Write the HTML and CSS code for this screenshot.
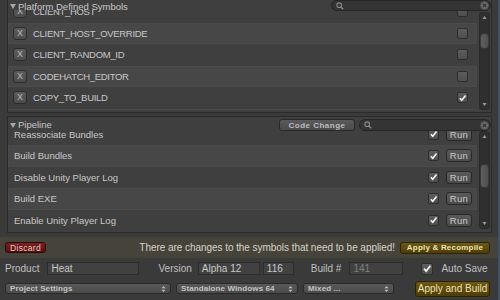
FILE: index.html
```html
<!DOCTYPE html>
<html>
<head>
<meta charset="utf-8">
<link rel="stylesheet" href="styles.css">
</head>
<body>
<div class="app">
  <section class="panel sym-panel">
    <div class="phead">
      <span class="fold"></span><span class="ptitle">Platform Defined Symbols</span>
      <span class="spacer"></span>
      <div class="search sym-search">
        <svg class="mag" width="8" height="8" viewBox="0 0 8 8"><circle cx="3.2" cy="3.2" r="2.3" fill="none" stroke="#8a8a8a" stroke-width="1.1"/><path d="M4.9 4.9 L7.2 7.2" stroke="#8a8a8a" stroke-width="1.4"/></svg>
        <span class="spacer"></span>
        <svg class="clr" width="9" height="9" viewBox="0 0 9 9"><circle cx="4.5" cy="4.5" r="4" fill="#6e6e6e" stroke="#4a4a4a" stroke-width="0.8"/><path d="M2.8 2.8 L6.2 6.2 M6.2 2.8 L2.8 6.2" stroke="#2e2e2e" stroke-width="1.2"/></svg>
      </div>
    </div>
    <div class="plist sym-list">
      <div class="rows sym-rows">
        <div class="row"><span class="xbtn">X</span><span class="sym">CLIENT_HOST</span><span class="cb"></span></div>
        <div class="row alt"><span class="xbtn">X</span><span class="sym">CLIENT_HOST_OVERRIDE</span><span class="cb"></span></div>
        <div class="row"><span class="xbtn">X</span><span class="sym">CLIENT_RANDOM_ID</span><span class="cb"></span></div>
        <div class="row alt"><span class="xbtn">X</span><span class="sym">CODEHATCH_EDITOR</span><span class="cb"></span></div>
        <div class="row"><span class="xbtn">X</span><span class="sym">COPY_TO_BUILD</span><span class="cb on"><svg width="10" height="10" viewBox="0 0 10 10"><path d="M2 5.2 L4.2 7.6 L8.4 2.2" fill="none" stroke="#f2f2f2" stroke-width="1.8"/></svg></span></div>
        <div class="row alt"><span class="xbtn">X</span><span class="sym">DEBUG_BUILD</span><span class="cb"></span></div>
      </div>
      <div class="scrollbar">
        <svg class="arr" width="11" height="9" viewBox="0 0 11 9"><path d="M3.5 6 L5.5 3 L7.5 6 Z" fill="#9a9a9a"/></svg>
        <div class="track sym-track"><span class="thumb"></span></div>
        <svg class="arr" width="11" height="9" viewBox="0 0 11 9"><path d="M3.5 3 L5.5 6 L7.5 3 Z" fill="#9a9a9a"/></svg>
      </div>
    </div>
  </section>

  <section class="panel pipe-panel">
    <div class="phead pipe-head">
      <span class="fold"></span><span class="ptitle">Pipeline</span>
      <span class="spacer"></span>
      <span class="btn codechange">Code Change</span>
      <div class="search pipe-search">
        <svg class="mag" width="8" height="8" viewBox="0 0 8 8"><circle cx="3.2" cy="3.2" r="2.3" fill="none" stroke="#8a8a8a" stroke-width="1.1"/><path d="M4.9 4.9 L7.2 7.2" stroke="#8a8a8a" stroke-width="1.4"/></svg>
        <span class="spacer"></span>
        <svg class="clr" width="9" height="9" viewBox="0 0 9 9"><circle cx="4.5" cy="4.5" r="4" fill="#6e6e6e" stroke="#4a4a4a" stroke-width="0.8"/><path d="M2.8 2.8 L6.2 6.2 M6.2 2.8 L2.8 6.2" stroke="#2e2e2e" stroke-width="1.2"/></svg>
      </div>
    </div>
    <div class="plist pipe-list">
      <div class="rows pipe-rows">
        <div class="row prow"><span class="step">Reassociate Bundles</span><span class="cb on"><svg width="10" height="10" viewBox="0 0 10 10"><path d="M2 5.2 L4.2 7.6 L8.4 2.2" fill="none" stroke="#f2f2f2" stroke-width="1.8"/></svg></span><span class="btn run">Run</span></div>
        <div class="row prow alt"><span class="step">Build Bundles</span><span class="cb on"><svg width="10" height="10" viewBox="0 0 10 10"><path d="M2 5.2 L4.2 7.6 L8.4 2.2" fill="none" stroke="#f2f2f2" stroke-width="1.8"/></svg></span><span class="btn run">Run</span></div>
        <div class="row prow"><span class="step">Disable Unity Player Log</span><span class="cb on"><svg width="10" height="10" viewBox="0 0 10 10"><path d="M2 5.2 L4.2 7.6 L8.4 2.2" fill="none" stroke="#f2f2f2" stroke-width="1.8"/></svg></span><span class="btn run">Run</span></div>
        <div class="row prow alt"><span class="step">Build EXE</span><span class="cb on"><svg width="10" height="10" viewBox="0 0 10 10"><path d="M2 5.2 L4.2 7.6 L8.4 2.2" fill="none" stroke="#f2f2f2" stroke-width="1.8"/></svg></span><span class="btn run">Run</span></div>
        <div class="row prow"><span class="step">Enable Unity Player Log</span><span class="cb on"><svg width="10" height="10" viewBox="0 0 10 10"><path d="M2 5.2 L4.2 7.6 L8.4 2.2" fill="none" stroke="#f2f2f2" stroke-width="1.8"/></svg></span><span class="btn run">Run</span></div>
      </div>
      <div class="scrollbar">
        <svg class="arr" width="11" height="9" viewBox="0 0 11 9"><path d="M3.5 6 L5.5 3 L7.5 6 Z" fill="#9a9a9a"/></svg>
        <div class="track pipe-track"><span class="thumb"></span></div>
        <svg class="arr" width="11" height="9" viewBox="0 0 11 9"><path d="M3.5 3 L5.5 6 L7.5 3 Z" fill="#9a9a9a"/></svg>
      </div>
    </div>
  </section>

  <div class="changes">
    <span class="btn discard">Discard</span>
    <span class="spacer"></span>
    <span class="msg">There are changes to the symbols that need to be applied!</span>
    <span class="btn gold recompile">Apply &amp; Recompile</span>
  </div>

  <div class="meta">
    <span class="lbl l-product">Product</span>
    <span class="field f-product">Heat</span>
    <span class="lbl l-version">Version</span>
    <span class="field f-version">Alpha 12</span>
    <span class="field f-minor">116</span>
    <span class="lbl l-build">Build #</span>
    <span class="field f-build dim">141</span>
    <span class="cb on big"><svg width="11" height="11" viewBox="0 0 11 11"><path d="M2.2 5.6 L4.6 8.3 L9.2 2.4" fill="none" stroke="#f2f2f2" stroke-width="1.9"/></svg></span>
    <span class="lbl l-auto">Auto Save</span>
  </div>

  <div class="actions">
    <span class="popup p-settings">Project Settings<svg width="5" height="8" viewBox="0 0 5 8"><path d="M0.5 3.3 L2.5 1 L4.5 3.3 Z M0.5 4.7 L2.5 7 L4.5 4.7 Z" fill="#bdbdbd"/></svg></span>
    <span class="popup p-platform">Standalone Windows 64<svg width="5" height="8" viewBox="0 0 5 8"><path d="M0.5 3.3 L2.5 1 L4.5 3.3 Z M0.5 4.7 L2.5 7 L4.5 4.7 Z" fill="#bdbdbd"/></svg></span>
    <span class="popup p-mixed">Mixed ...<svg width="5" height="8" viewBox="0 0 5 8"><path d="M0.5 3.3 L2.5 1 L4.5 3.3 Z M0.5 4.7 L2.5 7 L4.5 4.7 Z" fill="#bdbdbd"/></svg></span>
    <span class="spacer"></span>
    <span class="btn gold applybuild">Apply and Build</span>
  </div>
</div>
</body>
</html>
```

FILE: styles.css
```css
* { box-sizing: border-box; }

html, body {
  margin: 0;
  padding: 0;
}

body {
  width: 500px;
  height: 300px;
  overflow: hidden;
  background: #3a3a3a;
  font-family: "Liberation Sans", Arial, sans-serif;
  font-size: 9.5px;
  color: #c4c4c4;
}

.app {
  width: 500px;
  height: 300px;
  display: flex;
  flex-direction: column;
  border-right: 2px solid #3d5266;
  white-space: nowrap;
}

.spacer { flex: 1; }

/* ---------- panels ---------- */
.panel {
  margin: 0 6px 0 7px;
  border: 1px solid #2b2b2b;
  background: #3f3f3f;
  display: flex;
  flex-direction: column;
  flex: none;
}

.sym-panel {
  margin-top: -1px;
  height: 114px;
}

.pipe-panel {
  margin-top: 3px;
  height: 117px;
}

.phead {
  position: relative;
  z-index: 1;
  height: 10px;
  display: flex;
  align-items: flex-start;
  flex: none;
}

.pipe-head { height: 13px; }

.fold {
  width: 0;
  height: 0;
  margin: 4px 2px 0 2px;
  border-left: 3px solid transparent;
  border-right: 3px solid transparent;
  border-top: 5px solid #a8a8a8;
}

.ptitle {
  line-height: 11px;
  margin-top: 1px;
  font-size: 9.5px;
  color: #c8c8c8;
}

.pipe-head .fold { margin-top: 6px; }
.pipe-head .ptitle { margin-top: 3px; line-height: 10px; }

.search {
  height: 11px;
  border: 1px solid #262626;
  border-radius: 6px;
  background: #343434;
  display: flex;
  align-items: center;
  padding: 0 1px 0 4px;
}

.sym-search {
  width: 160px;
  margin-right: 0;
}

.pipe-search {
  width: 132px;
  height: 12px;
  margin-top: 2px;
  margin-left: 4px;
}

.mag { display: block; }
.clr { display: block; }

.btn {
  display: flex;
  align-items: center;
  justify-content: center;
  border: 1px solid #282828;
  border-radius: 3px;
  background: linear-gradient(#5a5a5a, #4b4b4b);
  color: #c8c8c8;
  flex: none;
  white-space: nowrap;
}

.codechange {
  width: 76px;
  height: 12px;
  margin-top: 2px;
  font-size: 8px;
  font-weight: bold;
  letter-spacing: 0.5px;
  color: #bdbdbd;
}

/* ---------- lists ---------- */
.plist {
  display: flex;
  flex: none;
  overflow: hidden;
}

.sym-list { height: 100px; }
.pipe-list { height: 101px; }

.rows {
  flex: none;
  width: 469px;
  display: flex;
  flex-direction: column;
}

.sym-rows { margin-top: -9px; }
.pipe-rows { margin-top: -6.5px; }

.row {
  flex: none;
  height: 21.5px;
  display: flex;
  align-items: center;
  padding: 0 9px 0 5px;
}

.row.alt {
  background: #474747;
  box-shadow: inset 0 0 0 1px #4b4b4b;
}

.xbtn {
  width: 14px;
  height: 13px;
  border: 1px solid #2c2c2c;
  border-radius: 3px;
  background: linear-gradient(#5c5c5c, #4c4c4c);
  color: #bdbdbd;
  font-size: 9px;
  line-height: 11px;
  text-align: center;
  flex: none;
}

.sym {
  flex: 1;
  margin-left: 6px;
  font-size: 9.5px;
  letter-spacing: -0.3px;
  color: #c8c8c8;
}

.cb {
  width: 11px;
  height: 11px;
  border: 1px solid #2e2e2e;
  border-radius: 2px;
  background: linear-gradient(#5d5d5d, #4e4e4e);
  flex: none;
  display: flex;
  align-items: center;
  justify-content: center;
}

.cb svg { display: block; }

.prow { padding: 0 5px 0 6px; }

.step {
  flex: 1;
  color: #c8c8c8;
}

.run {
  width: 26px;
  height: 13px;
  margin-left: 7px;
  font-size: 9.5px;
  letter-spacing: 0.3px;
}

.scrollbar {
  flex: none;
  width: 11px;
  margin-left: 2px;
  display: flex;
  flex-direction: column;
  background: #2f2f2f;
  border: 1px solid #2a2a2a;
  border-radius: 3px;
}

.sym-list .scrollbar { margin-top: 2px; height: 98px; }
.pipe-list .scrollbar { margin-top: 1px; height: 98px; }

.arr { display: block; flex: none; margin-left: -1px; }

.track {
  flex: 1;
  display: flex;
  flex-direction: column;
}

.thumb {
  width: 9px;
  border-radius: 4px;
  background: linear-gradient(90deg, #5e5e5e, #515151);
  border: 1px solid #3a3a3a;
}

.sym-track .thumb { height: 16px; margin-top: 11px; }
.pipe-track .thumb { height: 24px; margin-top: 23px; }

/* ---------- changes bar ---------- */
.changes {
  margin-top: 4px;
  height: 21px;
  flex: none;
  display: flex;
  align-items: center;
  background: #46433a;
  padding: 0 8px 0 5px;
}

.discard {
  width: 41px;
  height: 11px;
  border-color: #2c0808;
  background: linear-gradient(#7c2020, #5a1010);
  color: #e8c8c8;
  font-size: 8.5px;
  letter-spacing: 0.3px;
}

.msg {
  font-size: 10px;
  color: #d6d3c6;
  letter-spacing: -0.05px;
}

.gold {
  border-color: #2e2404;
  background: linear-gradient(#6c5816, #4d3d08);
  color: #eee2b0;
}

.recompile {
  margin-left: 5px;
  width: 90px;
  height: 12px;
  font-size: 8px;
  font-weight: bold;
  letter-spacing: 0.2px;
}

/* ---------- meta row ---------- */
.meta {
  height: 21px;
  flex: none;
  display: flex;
  align-items: center;
  padding-left: 5px;
}

.lbl { font-size: 10px; color: #c0c0c0; }

.field {
  height: 13px;
  border: 1px solid #2c2c2c;
  background: #414141;
  padding: 0 3px;
  font-size: 10px;
  line-height: 11px;
  color: #c8c8c8;
}

.field.dim { color: #7e7e7e; }

.f-product { margin-left: 8px; width: 92px; }
.l-version { margin-left: 19px; }
.f-version { margin-left: 6px; width: 62px; }
.f-minor { margin-left: 3px; width: 31px; }
.l-build { margin-left: 17px; }
.f-build { margin-left: 8px; width: 54px; }
.cb.big { width: 12px; height: 12px; margin-left: 18px; }
.l-auto { margin-left: 8px; }

/* ---------- actions row ---------- */
.actions {
  height: 19px;
  flex: none;
  display: flex;
  align-items: center;
  padding: 0 8px 0 5px;
}

.popup {
  height: 11px;
  display: flex;
  align-items: center;
  justify-content: space-between;
  padding: 0 4px 0 4px;
  border: 1px solid #2a2a2a;
  border-radius: 3px;
  background: linear-gradient(#595959, #4a4a4a);
  color: #c4c4c4;
  font-size: 8px;
  font-weight: bold;
  letter-spacing: 0.1px;
}

.popup svg { display: block; }

.p-settings { width: 166px; }
.p-platform { width: 122px; margin-left: 5px; }
.p-mixed { width: 91px; margin-left: 5px; }

.applybuild {
  width: 75px;
  height: 16px;
  font-size: 10px;
  letter-spacing: 0;
}
```
